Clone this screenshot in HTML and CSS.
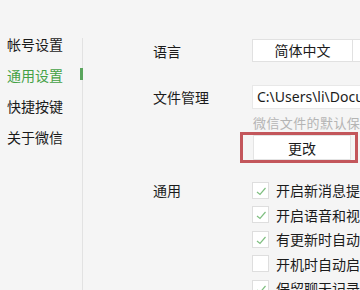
FILE: index.html
```html
<!DOCTYPE html>
<html lang="zh-CN">
<head>
<meta charset="utf-8">
<link rel="stylesheet" href="styles.css">
</head>
<body>
<div class="window">
  <nav class="sidebar">
    <div class="menu-item">帐号设置</div>
    <div class="menu-item active">通用设置</div>
    <div class="menu-item">快捷按键</div>
    <div class="menu-item">关于微信</div>
  </nav>
  <div class="divider"></div>
  <main class="content">
    <div class="row lang-row">
      <div class="label">语言</div>
      <div class="select">
        <div class="select-value">简体中文</div>
        <div class="select-arrow"></div>
      </div>
    </div>
    <div class="row file-row">
      <div class="label">文件管理</div>
      <div class="path-box">C:\Users\li\Documents\WeChat Files</div>
    </div>
    <div class="row hint-row">
      <div class="label"></div>
      <div class="hint">微信文件的默认保存位置</div>
    </div>
    <div class="row btn-row">
      <div class="label"></div>
      <div class="btn-wrap"><button class="btn">更改</button></div>
    </div>
    <div class="row general-row">
      <div class="label general-label">通用</div>
      <ul class="checks">
        <li class="check-item"><span class="box checked"><svg viewBox="0 0 17 17" width="17" height="17"><polyline points="5,10 8,12.5 13.5,6" /></svg></span>开启新消息提醒声音</li>
        <li class="check-item"><span class="box checked"><svg viewBox="0 0 17 17" width="17" height="17"><polyline points="5,10 8,12.5 13.5,6" /></svg></span>开启语音和视频通话提醒声音</li>
        <li class="check-item"><span class="box checked"><svg viewBox="0 0 17 17" width="17" height="17"><polyline points="5,10 8,12.5 13.5,6" /></svg></span>有更新时自动升级</li>
        <li class="check-item"><span class="box"></span>开机时自动启动微信</li>
        <li class="check-item"><span class="box checked"><svg viewBox="0 0 17 17" width="17" height="17"><polyline points="5,10 8,12.5 13.5,6" /></svg></span>保留聊天记录</li>
      </ul>
    </div>
  </main>
</div>
</body>
</html>
```
FILE: styles.css
```css
* { box-sizing: border-box; }
html, body {
  margin: 0;
  padding: 0;
  width: 360px;
  height: 290px;
  overflow: hidden;
  background: #f5f5f5;
}
body {
  font-family: "Noto Sans CJK SC", "Noto Sans", sans-serif;
  font-size: 14px;
  color: #1b1b1b;
}
.window {
  display: flex;
  height: 290px;
}
.sidebar {
  width: 82px;
  flex: none;
  padding-top: 29px;
}
.menu-item {
  position: relative;
  height: 31px;
  line-height: 31px;
  padding-left: 7px;
  white-space: nowrap;
}
.menu-item.active { color: #44a146; }
.menu-item.active::after {
  content: "";
  position: absolute;
  left: 80px;
  top: 8px;
  width: 3px;
  height: 12px;
  background: #5aa55d;
}
.divider {
  width: 1px;
  flex: none;
  margin-top: 38px;
  background: #e2e2e2;
}
.content {
  flex: 1;
  min-width: 0;
  padding-top: 39px;
  padding-left: 70px;
  overflow: hidden;
}
.row {
  display: flex;
  align-items: center;
}
.label {
  width: 99px;
  flex: none;
  white-space: nowrap;
}
.select {
  display: flex;
  height: 23px;
  flex: none;
  width: 130px;
  background: #fff;
  border: 1px solid #e1e1e1;
}
.select-value {
  width: 100px;
  flex: none;
  text-align: center;
  line-height: 21px;
  border-right: 1px solid #e1e1e1;
}
.select-arrow { flex: 1; }
.file-row { margin-top: 23px; }
.path-box {
  flex: none;
  width: 200px;
  height: 24px;
  line-height: 22px;
  padding-left: 4px;
  background: #fff;
  border: 1px solid #e8e8e8;
  white-space: nowrap;
  overflow: hidden;
  font-family: "Noto Sans", "Noto Sans CJK SC", sans-serif;
  font-size: 14px;
}
.hint-row { height: 22px; padding-top: 4px; }
.hint {
  flex: none;
  white-space: nowrap;
  font-size: 13px;
  color: #b4b4b4;
  padding-left: 1px;
  letter-spacing: 0.4px;
}
.btn-row { margin-top: 4px; }
.btn-wrap {
  position: relative;
  flex: none;
  padding-left: 1px;
}
.btn-wrap::after {
  content: "";
  position: absolute;
  left: -12px;
  right: -7px;
  top: -3px;
  bottom: -3px;
  border: 3px solid #c3565b;
  pointer-events: none;
}
.btn {
  display: block;
  width: 98px;
  height: 25px;
  background: #fff;
  border: 1px solid #e4e4e4;
  font-family: "Noto Sans CJK SC", sans-serif;
  font-size: 14px;
  color: #1b1b1b;
  padding: 0;
}
.general-row {
  align-items: flex-start;
  margin-top: 18px;
}
.general-label { line-height: 24px; height: 24px; }
.checks {
  list-style: none;
  margin: 0;
  padding: 0;
  flex: none;
}
.check-item {
  display: flex;
  align-items: center;
  height: 24.5px;
  white-space: nowrap;
}
.box {
  width: 17px;
  height: 17px;
  flex: none;
  margin-right: 7px;
  background: #fff;
  border: 1px solid #dedede;
  position: relative;
}
.box svg {
  position: absolute;
  left: -1px;
  top: -1px;
}
.box polyline {
  fill: none;
  stroke: #7fbf80;
  stroke-width: 1.2;
}
```
